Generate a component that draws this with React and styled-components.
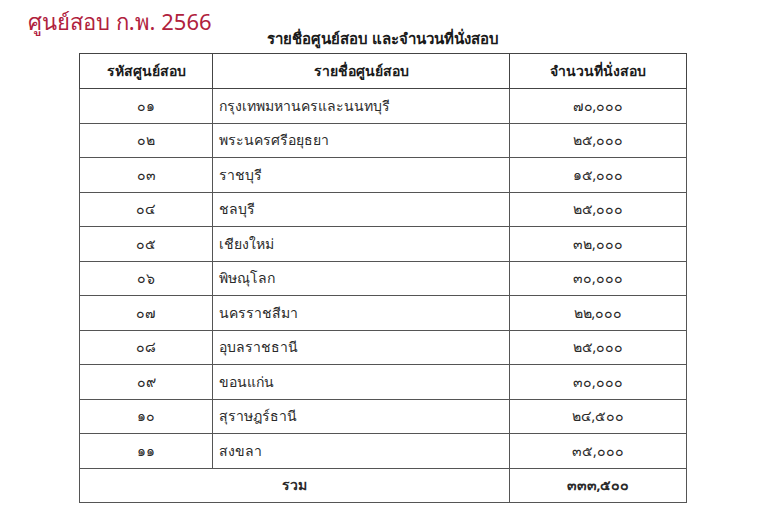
import React from 'react';
import styled, { createGlobalStyle } from 'styled-components';

const rows = [
  ['๐๑', 'กรุงเทพมหานครและนนทบุรี', '๗๐,๐๐๐'],
  ['๐๒', 'พระนครศรีอยุธยา', '๒๕,๐๐๐'],
  ['๐๓', 'ราชบุรี', '๑๕,๐๐๐'],
  ['๐๔', 'ชลบุรี', '๒๕,๐๐๐'],
  ['๐๕', 'เชียงใหม่', '๓๒,๐๐๐'],
  ['๐๖', 'พิษณุโลก', '๓๐,๐๐๐'],
  ['๐๗', 'นครราชสีมา', '๒๒,๐๐๐'],
  ['๐๘', 'อุบลราชธานี', '๒๕,๐๐๐'],
  ['๐๙', 'ขอนแก่น', '๓๐,๐๐๐'],
  ['๑๐', 'สุราษฎร์ธานี', '๒๔,๕๐๐'],
  ['๑๑', 'สงขลา', '๓๕,๐๐๐'],
];

function App() {
  return (
    <Page>
      <GlobalStyle />
      <Title>ศูนย์สอบ ก.พ. 2566</Title>
      <Subtitle>รายชื่อศูนย์สอบ และจำนวนที่นั่งสอบ</Subtitle>
      <Table>
        <thead>
          <tr>
            <Th width="132px">รหัสศูนย์สอบ</Th>
            <Th width="296px">รายชื่อศูนย์สอบ</Th>
            <Th>จำนวนที่นั่งสอบ</Th>
          </tr>
        </thead>
        <tbody>
          {rows.map(([code, name, seats]) => (
            <tr key={code}>
              <Td>{code}</Td>
              <Td left>{name}</Td>
              <Td>{seats}</Td>
            </tr>
          ))}
          <tr>
            <Td colSpan={2} bold>รวม</Td>
            <Td bold>๓๓๓,๕๐๐</Td>
          </tr>
        </tbody>
      </Table>
    </Page>
  );
}

export default App;

const GlobalStyle = createGlobalStyle`
  body {
    margin: 0;
    background: #ffffff;
    font-family: "Noto Sans", "DejaVu Sans", sans-serif;
  }
`;

const Page = styled.div`
  width: 758px;
  height: 516px;
  padding: 9px 0 0 28px;
  box-sizing: border-box;
`;

const Title = styled.div`
  color: #b0213d;
  font-size: 22px;
  line-height: 24px;
  height: 24px;
`;

const Subtitle = styled.div`
  width: 608px;
  margin: -4px 0 0 51px;
  text-align: center;
  font-weight: bold;
  font-size: 15px;
  line-height: 18px;
  height: 24px;
  color: #1a1a1a;
`;

const Table = styled.table`
  margin-left: 51px;
  width: 608px;
  border-collapse: collapse;
  border: 1.5px solid #333;
  color: #2a2a2a;
  font-size: 14px;
  line-height: 16px;
`;

const Th = styled.th`
  width: ${(p) => p.width || 'auto'};
  height: 34px;
  padding: 0;
  border: 1px solid #444;
  font-weight: bold;
  color: #1a1a1a;
  text-align: center;
`;

const Td = styled.td`
  height: 33.5px;
  padding: 0 ${(p) => (p.left ? '6px' : '0')};
  border: 1px solid #555;
  text-align: ${(p) => (p.left ? 'left' : 'center')};
  font-weight: ${(p) => (p.bold ? 'bold' : 'normal')};
`;
